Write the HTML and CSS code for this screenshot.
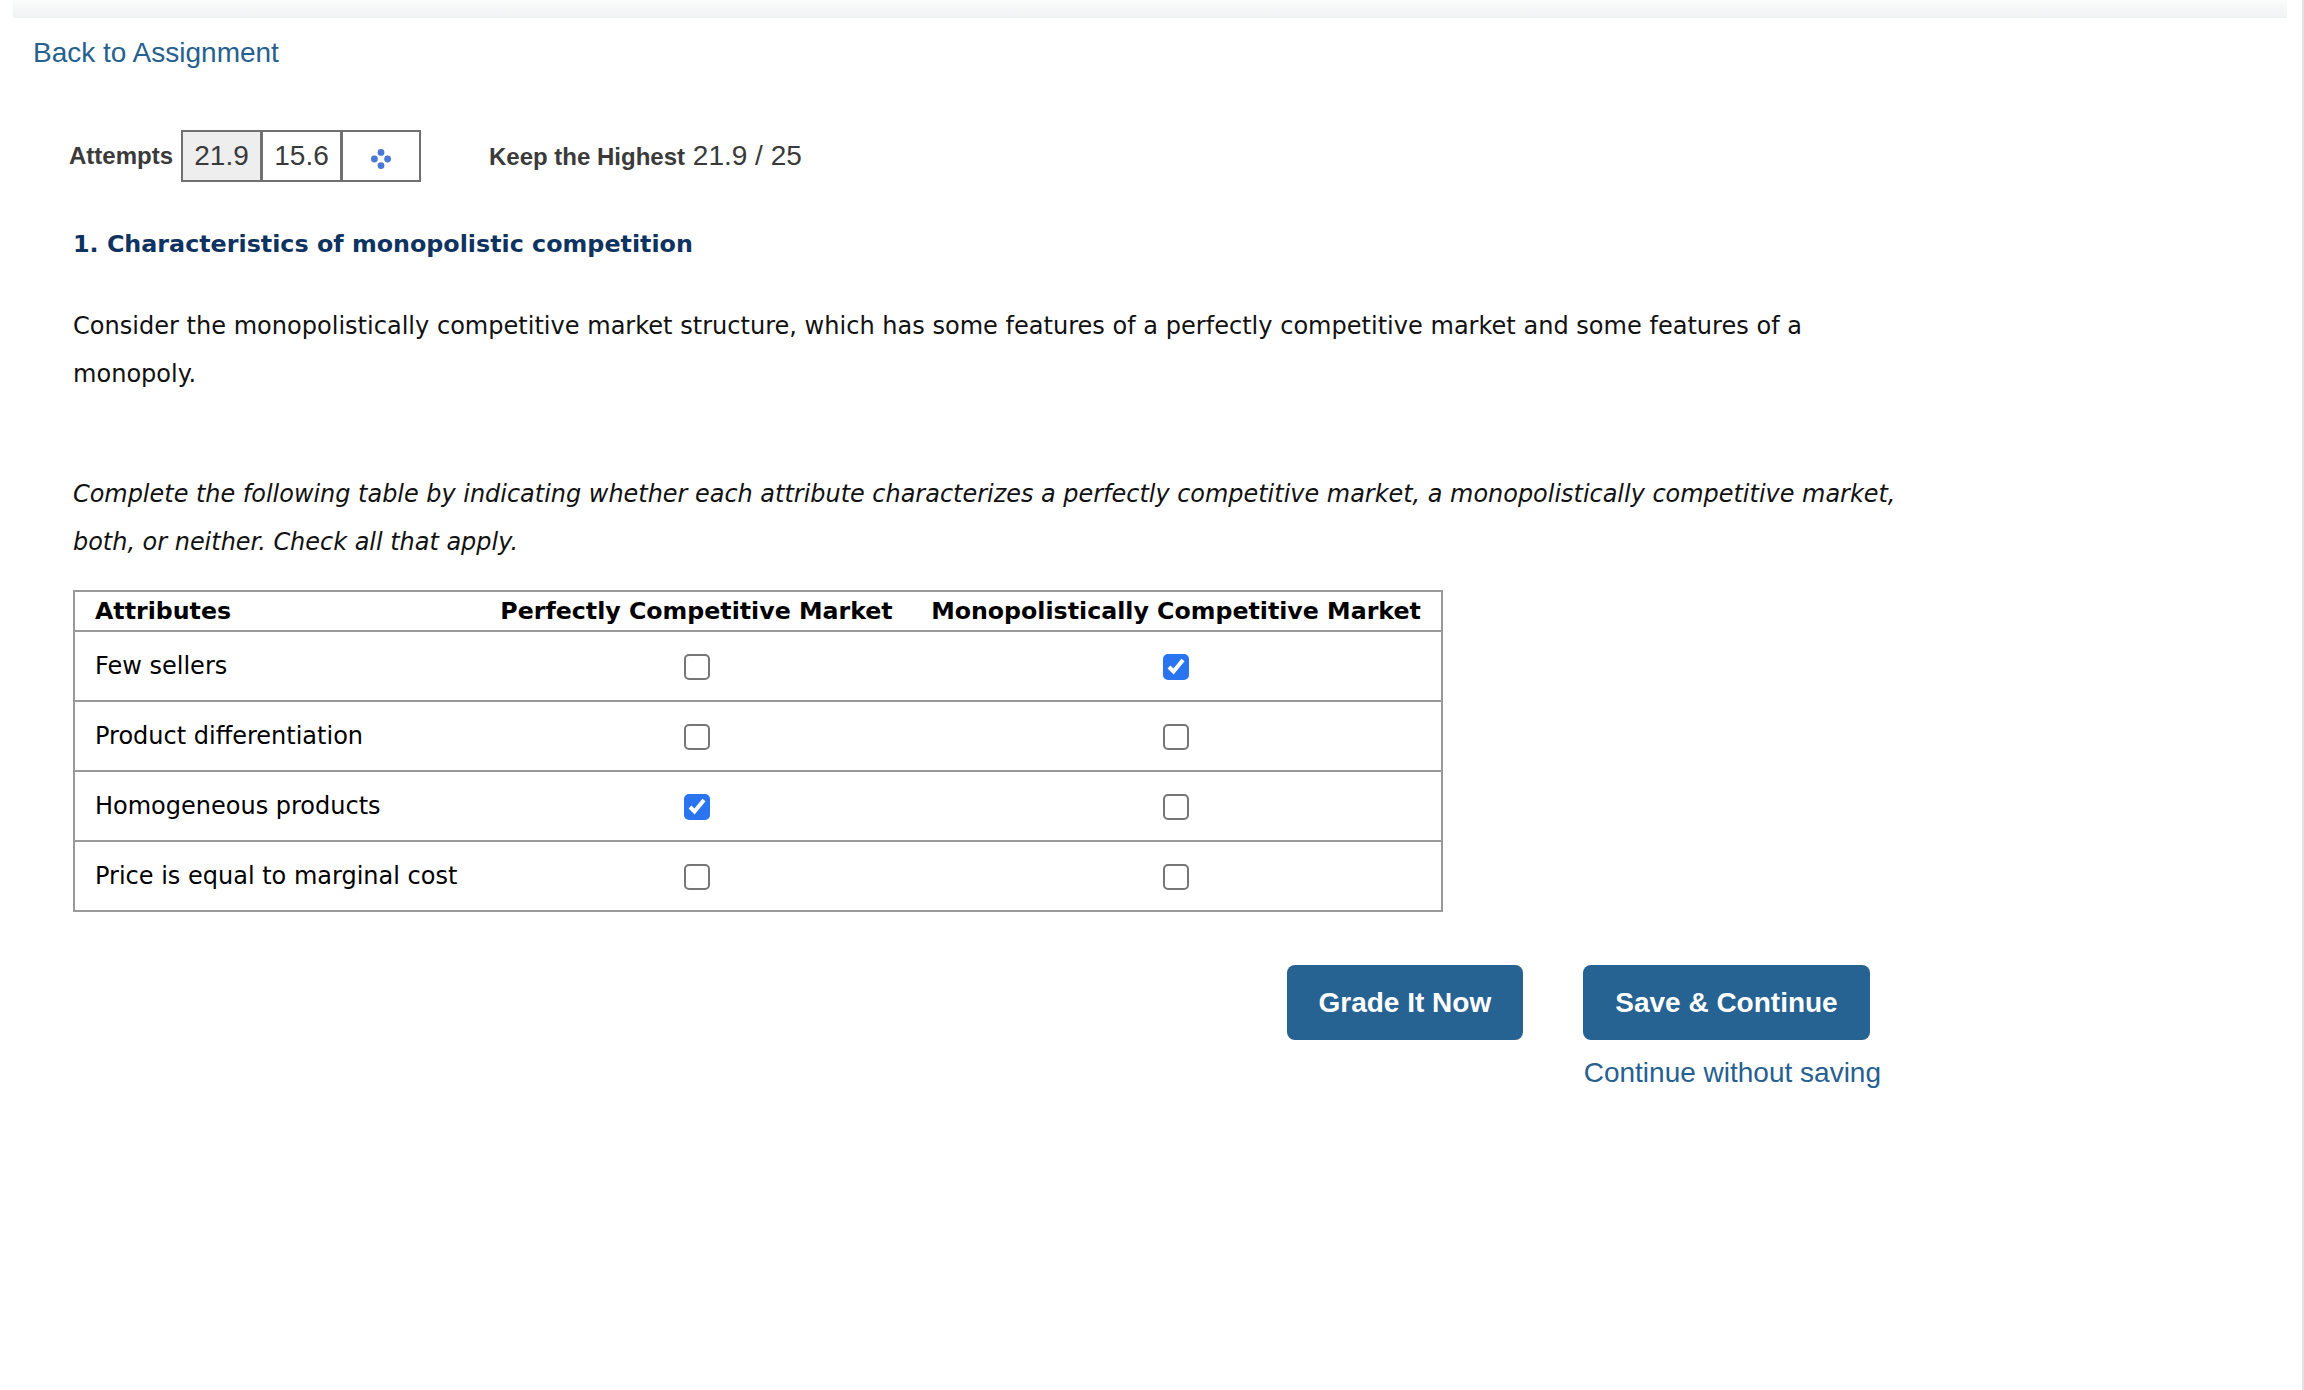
FILE: index.html
```html
<!DOCTYPE html>
<html lang="en">
<head>
<meta charset="utf-8">
<title>Characteristics of monopolistic competition</title>
<link rel="stylesheet" href="styles.css">
</head>
<body>
<div class="topbar"></div>
<a class="back" href="#">Back to Assignment</a>
<div class="attempts">
  <span class="label attempts-label">Attempts</span>
  <div class="tabs">
    <span class="tab active">21.9</span>
    <span class="tab">15.6</span>
    <span class="tab">
      <svg class="diamonds" width="22" height="22" viewBox="0 0 22 22" aria-hidden="true">
        <circle cx="11" cy="4.4" r="3.4"/><circle cx="4.4" cy="11" r="3.4"/><circle cx="17.6" cy="11" r="3.4"/><circle cx="11" cy="17.6" r="3.4"/>
      </svg>
    </span>
  </div>
  <span class="keep"><span class="label">Keep the Highest</span> 21.9 / 25</span>
</div>
<main class="question">
  <h1 class="title">1. Characteristics of monopolistic competition</h1>
  <p class="intro">Consider the monopolistically competitive market structure, which has some features of a perfectly competitive market and some features of a monopoly.</p>
  <p class="instructions">Complete the following table by indicating whether each attribute characterizes a perfectly competitive market, a monopolistically competitive market, both, or neither. Check all that apply.</p>
  <table class="grid">
    <thead>
      <tr><th class="attr">Attributes</th><th class="perfect">Perfectly Competitive Market</th><th class="mono">Monopolistically Competitive Market</th></tr>
    </thead>
    <tbody>
      <tr><td>Few sellers</td><td class="mid"><span class="box"></span></td><td class="mid"><span class="box on"><svg viewBox="0 0 26 26"><path d="M6 13l4.5 4.5L20 6"/></svg></span></td></tr>
      <tr><td>Product differentiation</td><td class="mid"><span class="box"></span></td><td class="mid"><span class="box"></span></td></tr>
      <tr><td>Homogeneous products</td><td class="mid"><span class="box on"><svg viewBox="0 0 26 26"><path d="M6 13l4.5 4.5L20 6"/></svg></span></td><td class="mid"><span class="box"></span></td></tr>
      <tr><td>Price is equal to marginal cost</td><td class="mid"><span class="box"></span></td><td class="mid"><span class="box"></span></td></tr>
    </tbody>
  </table>
</main>
<div class="actions">
  <button class="btn" type="button">Grade It Now</button>
  <div class="save-col">
    <button class="btn" type="button">Save &amp; Continue</button>
    <a class="continue" href="#">Continue without saving</a>
  </div>
</div>
</body>
</html>
```
FILE: styles.css
```css
html, body { margin: 0; padding: 0; background: #fff; }
body {
  height: 1390px;
  overflow: hidden;
  box-sizing: border-box;
  border-right: 2px solid #e4e4e4;
  font-family: "Liberation Sans", Arial, sans-serif;
  color: #3a3a3a;
}
.topbar {
  height: 18px;
  margin: 0 15px 0 13px;
  background: linear-gradient(#fbfcfc, #eff3f2);
}
.back {
  display: block;
  margin: 19px 0 0 33px;
  font-size: 28px;
  line-height: 32px;
  color: #26608f;
  text-decoration: none;
}
.attempts {
  display: flex;
  align-items: center;
  height: 52px;
  margin: 61px 0 0 69px;
  font-size: 28px;
}
.label { font-weight: bold; font-size: 24px; }
.attempts-label { margin-right: 8px; }
.tabs { display: flex; border: 2px solid #707070; height: 48px; }
.tab {
  width: 77px;
  display: flex;
  align-items: center;
  justify-content: center;
  border-right: 3px solid #707070;
}
.tab:last-child { border-right: 0; width: 76px; }
.tab.active { background: #eee; }
.diamonds { fill: #4a78d6; margin-top: 5px; }
.keep { margin-left: 68px; }
.question { margin: 0 0 0 73px; width: 1830px; }
.title {
  margin: 46px 0 0;
  font-family: "DejaVu Sans", Verdana, sans-serif;
  font-size: 23.8px;
  line-height: 32px;
  font-weight: bold;
  color: #0e3360;
}
.intro, .instructions {
  margin: 0;
  font-family: "DejaVu Sans", Verdana, sans-serif;
  font-size: 24.06px;
  line-height: 48px;
  color: #111;
}
.intro { margin-top: 42px; }
.instructions { margin-top: 72px; font-size: 23.94px; font-style: italic; }
.grid {
  margin-top: 24px;
  width: 1370px;
  table-layout: fixed;
  border-collapse: collapse;
  border: 2px solid #999;
  font-family: "DejaVu Sans", Verdana, sans-serif;
  font-size: 24px;
  color: #000;
}
.grid th { height: 38px; padding: 0; font-size: 23.7px; font-weight: bold; border-bottom: 2px solid #999; white-space: nowrap; }
.grid td { height: 68px; padding: 0 0 0 20px; border-bottom: 2px solid #999; }
.grid td.mid { padding: 0; text-align: center; }
.attr { width: 387px; text-align: left; padding-left: 20px !important; }
.perfect { width: 429px; text-align: center; }
.mono { text-align: center; }
.box {
  display: inline-block;
  box-sizing: border-box;
  width: 26px;
  height: 26px;
  vertical-align: middle;
  background: #fff;
  border: 2px solid #767676;
  border-radius: 5px;
}
.box.on { border: 0; background: #2a74f0; }
.box svg { display: block; width: 26px; height: 26px; fill: none; stroke: #fff; stroke-width: 4; }
.actions {
  display: flex;
  align-items: flex-start;
  gap: 60px;
  margin: 53px 0 0 1287px;
}
.btn {
  height: 75px;
  padding: 0 31.5px;
  border: 0;
  border-radius: 8px;
  background: #266292;
  color: #fff;
  font-family: "Liberation Sans", Arial, sans-serif;
  font-size: 28px;
  font-weight: bold;
}
.save-col { display: flex; flex-direction: column; align-items: flex-start; }
.save-col .btn { padding: 0 32.5px; }
.continue {
  margin: 15px 0 0 1px;
  font-size: 28px;
  line-height: 36px;
  color: #26608f;
  text-decoration: none;
  white-space: nowrap;
}
```
